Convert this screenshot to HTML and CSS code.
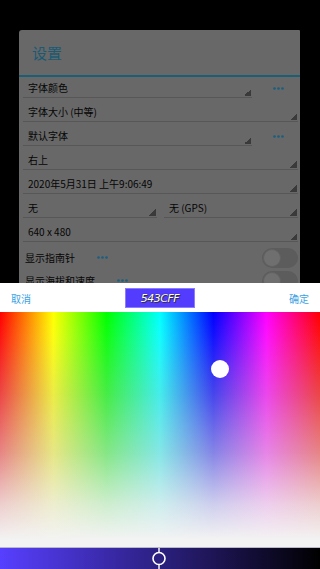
FILE: index.html
```html
<!DOCTYPE html>
<html lang="zh">
<head>
<meta charset="utf-8">
<title>设置</title>
<link rel="stylesheet" href="styles.css">
</head>
<body>
<div class="screen">
  <div class="panel">
    <div class="title">设置</div>
    <div class="list">
      <div class="row">
        <div class="spinner">字体颜色</div>
        <div class="more"><svg width="11" height="3" viewBox="0 0 11 3"><circle cx="1.5" cy="1.5" r="1.3"/><circle cx="5.5" cy="1.5" r="1.3"/><circle cx="9.5" cy="1.5" r="1.3"/></svg></div>
      </div>
      <div class="row"><div class="spinner">字体大小 (中等)</div></div>
      <div class="row">
        <div class="spinner">默认字体</div>
        <div class="more"><svg width="11" height="3" viewBox="0 0 11 3"><circle cx="1.5" cy="1.5" r="1.3"/><circle cx="5.5" cy="1.5" r="1.3"/><circle cx="9.5" cy="1.5" r="1.3"/></svg></div>
      </div>
      <div class="row"><div class="spinner">右上</div></div>
      <div class="row"><div class="spinner">2020年5月31日 上午9:06:49</div></div>
      <div class="row split">
        <div class="spinner">无</div>
        <div class="spinner">无 (GPS)</div>
      </div>
      <div class="row"><div class="spinner">640 x 480</div></div>
      <div class="toggles">
        <div class="trow">
          <span class="tlabel">显示指南针</span>
          <svg class="tdots" width="11" height="3" viewBox="0 0 11 3"><circle cx="1.5" cy="1.5" r="1.3"/><circle cx="5.5" cy="1.5" r="1.3"/><circle cx="9.5" cy="1.5" r="1.3"/></svg>
          <span class="switch"><span class="thumb"></span></span>
        </div>
        <div class="trow">
          <span class="tlabel">显示海拔和速度</span>
          <svg class="tdots" width="11" height="3" viewBox="0 0 11 3"><circle cx="1.5" cy="1.5" r="1.3"/><circle cx="5.5" cy="1.5" r="1.3"/><circle cx="9.5" cy="1.5" r="1.3"/></svg>
          <span class="switch"><span class="thumb"></span></span>
        </div>
      </div>
    </div>
  </div>

  <div class="sheet">
    <div class="sheet-head">
      <span class="btn">取消</span>
      <span class="swatch">543CFF</span>
      <span class="btn">确定</span>
    </div>
    <div class="spectrum">
      <div class="whiten"></div>
      <span class="picker"></span>
    </div>
    <div class="value-bar">
      <svg class="value-knob" width="16" height="21" viewBox="0 0 16 21">
        <line x1="8" y1="0" x2="8" y2="4" stroke="#fff" stroke-width="1.4"/>
        <circle cx="8" cy="10.5" r="6" fill="none" stroke="#fff" stroke-width="1.6"/>
        <line x1="8" y1="17" x2="8" y2="21" stroke="#fff" stroke-width="1.4"/>
      </svg>
    </div>
  </div>
</div>
</body>
</html>
```
FILE: styles.css
```css
* { box-sizing: border-box; }
html, body {
  margin: 0;
  padding: 0;
  background: #000;
}
body {
  font-family: "Noto Sans CJK SC", "Noto Sans", sans-serif;
  width: 320px;
  height: 569px;
  overflow: hidden;
}
.screen {
  position: relative;
  width: 320px;
  height: 569px;
  padding-top: 30px;
}
.panel {
  margin-left: 19px;
  width: 281px;
  height: 300px;
  background: #686868;
  border-top-left-radius: 3px;
  border-top-right-radius: 1px;
}
.title {
  height: 47px;
  border-bottom: 2px solid #1a5f75;
  padding-left: 13px;
  padding-top: 11px;
  font-size: 15px;
  line-height: 23px;
  color: #1a5a73;
}
.list {
  margin-top: -3px;
  padding: 0 2px 0 4px;
}
.row {
  height: 24px;
  display: flex;
  align-items: flex-end;
}
.row.split { gap: 7px; }
.spinner {
  flex: 1;
  height: 20px;
  border-bottom: 1px solid #575757;
  padding-left: 5px;
  display: flex;
  align-items: center;
  font-size: 10px;
  color: #050505;
  white-space: nowrap;
  background: linear-gradient(135deg, transparent 50%, #3a3a3a 50%) no-repeat right 1px bottom 1px / 7px 7px;
}
.more {
  width: 46px;
  height: 20px;
  display: flex;
  align-items: center;
  justify-content: center;
  padding-left: 6px;
}
.more svg, .tdots { fill: #185f82; }
.toggles {
  margin-top: 4px;
}
.trow {
  height: 23px;
  display: flex;
  align-items: center;
  padding-left: 2px;
}
.tlabel {
  font-size: 10px;
  color: #050505;
}
.tdots {
  margin-left: 22px;
}
.switch {
  margin-left: auto;
  width: 36px;
  height: 20px;
  border-radius: 10px;
  background: #5c5c5c;
  display: flex;
  align-items: center;
  padding-left: 1px;
}
.thumb {
  width: 18px;
  height: 18px;
  border-radius: 50%;
  background: #6f6f6f;
  border: 1px solid #616161;
}
.sheet {
  position: absolute;
  left: 0;
  bottom: 0;
  width: 320px;
  height: 286px;
  background: #fff;
  display: flex;
  flex-direction: column;
}
.sheet-head {
  height: 29px;
  display: flex;
  align-items: center;
  justify-content: space-between;
  padding: 0 11px 0 11px;
}
.btn {
  font-size: 10px;
  color: #3aa2e4;
  line-height: 14px;
  padding-top: 2px;
}
.swatch {
  width: 70px;
  height: 20px;
  background: #543cff;
  border: 1px solid #8b7dff;
  color: #fff;
  font-size: 11px;
  font-style: italic;
  font-family: "DejaVu Sans", sans-serif;
  display: flex;
  align-items: center;
  justify-content: center;
  letter-spacing: -0.5px;
  text-shadow: 0 0 1px #222, 1px 1px 0 #333;
  margin-top: 1px;
}
.spectrum {
  position: relative;
  height: 235px;
  background: linear-gradient(to right, #ff0000 0%, #ffff00 16.67%, #00ff00 33.33%, #00ffff 50%, #0000ff 66.67%, #ff00ff 83.33%, #ff0000 100%);
}
.whiten {
  height: 100%;
  background: linear-gradient(to bottom, rgba(238,238,238,0) 0%, rgba(232,232,232,0.08) 10%, rgba(200,200,200,0.35) 35%, rgba(215,215,215,0.62) 60%, rgba(235,235,235,0.88) 82%, rgba(243,243,243,1) 97%);
}
.picker {
  position: absolute;
  left: 211px;
  top: 48px;
  width: 18px;
  height: 18px;
  border-radius: 50%;
  background: #fff;
}
.value-bar {
  position: relative;
  flex: 1;
  border-top: 1px solid #b9b9c9;
  background: linear-gradient(to right, #573fff, #000);
}
.value-knob {
  position: absolute;
  left: 151px;
  top: 0;
}
```
